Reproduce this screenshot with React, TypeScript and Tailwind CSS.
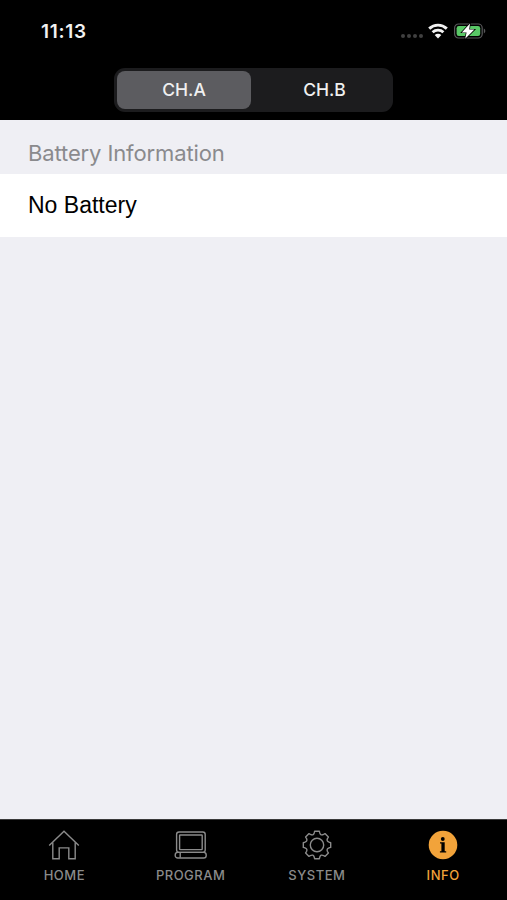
import React, { useState } from "react";
import clsx from "clsx";

type Channel = "CH.A" | "CH.B";
type TabId = "HOME" | "PROGRAM" | "SYSTEM" | "INFO";

const CHANNELS: Channel[] = ["CH.A", "CH.B"];

// Gear outline: 8 teeth with curved notches between them
const gearPath = (() => {
  const at = (deg: number, r: number) => {
    const a = ((deg - 90) * Math.PI) / 180;
    return `${(15 + r * Math.cos(a)).toFixed(2)} ${(15 + r * Math.sin(a)).toFixed(2)}`;
  };
  let d = `M${at(-10, 13.9)}`;
  for (let i = 0; i < 8; i++) {
    const t = i * 45;
    d += `L${at(t + 10, 13.9)}L${at(t + 13, 12.4)}Q${at(t + 22.5, 9.9)} ${at(t + 32, 12.4)}L${at(t + 35, 13.9)}`;
  }
  return `${d}Z`;
})();

function HomeIcon() {
  return (
    <svg width="32" height="30" viewBox="0 0 32 30" fill="none" stroke="currentColor" strokeWidth="1.4">
      <path d="M1.2 15.6 16 1.2l14.8 14.4" />
      <path d="M4.8 12.6v16.2h6.4V17.9h9.6v10.9h6.4V12.6" />
    </svg>
  );
}

function ProgramIcon() {
  return (
    <svg width="34" height="30" viewBox="0 0 34 30" fill="none" stroke="currentColor" strokeWidth="1.4">
      <rect x="3.6" y="2" width="28.6" height="20.4" rx="2.4" />
      <rect x="6.6" y="5" width="22.6" height="14.6" rx="0.6" />
      <rect x="2.2" y="22.4" width="31" height="5.6" rx="2.6" />
      <path d="M7.2 22.8v5" />
    </svg>
  );
}

function GearIcon() {
  return (
    <svg width="30" height="30" viewBox="0 0 30 30" fill="none" stroke="currentColor" strokeWidth="1.4" strokeLinejoin="round">
      <path d={gearPath} />
      <circle cx="15" cy="15" r="6.7" />
    </svg>
  );
}

function InfoIcon() {
  return (
    <svg width="30" height="30" viewBox="0 0 30 30">
      <circle cx="15" cy="15" r="14.3" fill="currentColor" />
      <circle cx="14.8" cy="9" r="1.9" fill="#000" />
      <path d="M12 12.3h4.7v8.9h1.5v1.3h-6.3v-1.3h1.5v-7.6H12z" fill="#000" />
    </svg>
  );
}

const TABS: { id: TabId; icon: React.ReactNode }[] = [
  { id: "HOME", icon: <HomeIcon /> },
  { id: "PROGRAM", icon: <ProgramIcon /> },
  { id: "SYSTEM", icon: <GearIcon /> },
  { id: "INFO", icon: <InfoIcon /> },
];

function StatusBar() {
  return (
    <div className="h-[62px] shrink-0 flex items-center justify-between pl-[41px] pr-5 text-[#f2f2f2]">
      <span className="pt-[2px] text-[19px] font-semibold tracking-[0.7px]">11:13</span>
      <div className="flex items-center">
        {/* No signal */}
        <div className="flex gap-[2px] mt-[10px] mr-[5px]">
          {[0, 1, 2, 3].map((i) => (
            <span key={i} className="size-1 rounded-full bg-[#404040]" />
          ))}
        </div>
        <svg width="20" height="16" viewBox="0 0 20 16" fill="none" stroke="currentColor" strokeWidth="2.9" className="mr-[5px]">
          <path d="M1.2 5.6C6.2.9 13.8.9 18.8 5.6" />
          <path d="M4.6 9.2c3-2.8 7.8-2.8 10.8 0" />
          <path d="M10 15.4 6.7 12c1.8-1.7 4.8-1.7 6.6 0z" fill="currentColor" stroke="none" />
        </svg>
        <svg width="34" height="18" viewBox="0 0 34 18">
          <rect x="1.6" y="2" width="27.6" height="14" rx="4" fill="none" stroke="#58585a" strokeWidth="1.2" />
          <rect x="3.6" y="4" width="23.6" height="10" rx="2.2" fill="#59c866" />
          <path d="M30.8 6.6c2 .8 2 4 0 4.8z" fill="#58585a" />
          <path d="M17 1.4 8.8 10.4h4.8l-1.4 6.4 9.2-9.2h-5.2z" fill="#fff" stroke="#000" strokeWidth="1.4" paintOrder="stroke" />
        </svg>
      </div>
    </div>
  );
}

export default function App() {
  const [channel, setChannel] = useState<Channel>("CH.A");
  const [tab, setTab] = useState<TabId>("INFO");

  return (
    <div className="w-full h-[900px] flex flex-col bg-black font-[Inter,sans-serif] overflow-hidden">
      <StatusBar />

      {/* Channel switch */}
      <div className="h-[58px] shrink-0 flex justify-center pt-[6px]">
        <div className="w-[279px] h-[44px] flex p-[3px] rounded-[11px] bg-[#1c1c1e]">
          {CHANNELS.map((c) => (
            <button
              key={c}
              onClick={() => setChannel(c)}
              className={clsx(
                "flex-1 first:grow-0 first:basis-[134px] last:pl-[8px] rounded-[8px] text-[17.5px] font-medium text-[#f0f0f0]",
                c === channel && "bg-[#5c5c60]"
              )}
            >
              {c}
            </button>
          ))}
        </div>
      </div>

      {/* Content */}
      <main className="flex-1 bg-[#efeff4]">
        <h2 className="h-[54px] pl-7 pt-[16px] text-[22px] leading-[34px] font-normal tracking-[-0.12px] text-[#8a8a8d]">
          Battery Information
        </h2>
        <div className="h-[63px] pl-7 flex items-center bg-white text-black font-['Liberation_Sans',sans-serif] text-[23px]">
          No Battery
        </div>
      </main>

      {/* Tab bar */}
      <nav className="h-[81px] shrink-0 grid grid-cols-4 px-px border-t border-[#3a3a3a]">
        {TABS.map(({ id, icon }) => (
          <button
            key={id}
            onClick={() => setTab(id)}
            className={clsx(
              "flex flex-col items-center pt-[10px]",
              id === tab ? "text-[#f2a33a]" : "text-[#8b8b8b]"
            )}
          >
            {icon}
            <span className="mt-[7px] pl-[0.5px] text-[13px] leading-4 font-medium tracking-[0.5px]">{id}</span>
          </button>
        ))}
      </nav>
    </div>
  );
}
